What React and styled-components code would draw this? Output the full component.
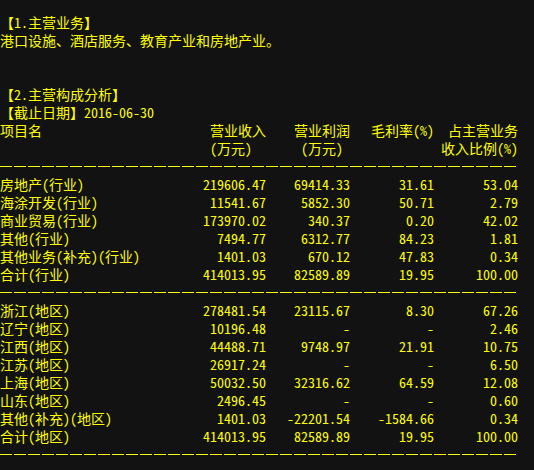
import React from 'react';
import styled, { createGlobalStyle } from 'styled-components';

const GlobalStyle = createGlobalStyle`
	html, body {
		margin: 0;
		padding: 0;
		background: #121212;
	}
`;

const Screen = styled.div`
	width: 534px;
	height: 470px;
	box-sizing: border-box;
	padding-top: 13px;
	background: #121212;
	color: #ffff00;
	font-family: "Noto Sans Mono CJK SC", "Liberation Mono", "Noto Sans CJK SC", monospace;
	font-size: 14px;
	line-height: 18px;
	overflow: hidden;
`;

const Line = styled.div`
	height: 18px;
	white-space: pre;
`;

const Table = styled.div`
	display: grid;
	grid-template-columns: 182px repeat(4, 84px);
	grid-auto-rows: 18px;
`;

const NameCell = styled.div`
	white-space: pre;
`;

const Cell = styled.div`
	white-space: pre;
	text-align: right;
	padding-right: ${(props) => props.$pad || 0}px;
`;

const Rule = styled.div`
	grid-column: 1 / -1;
	position: relative;
	height: 18px;

	&::after {
		content: '';
		position: absolute;
		left: 0;
		top: 9px;
		width: 518px;
		height: 1px;
		background: repeating-linear-gradient(
			to right,
			#ffff00 0,
			#ffff00 12px,
			transparent 12px,
			transparent 14px
		);
	}
`;

const industryRows = [
	['房地产(行业)', '219606.47', '69414.33', '31.61', '53.04'],
	['海涂开发(行业)', '11541.67', '5852.30', '50.71', '2.79'],
	['商业贸易(行业)', '173970.02', '340.37', '0.20', '42.02'],
	['其他(行业)', '7494.77', '6312.77', '84.23', '1.81'],
	['其他业务(补充)(行业)', '1401.03', '670.12', '47.83', '0.34'],
	['合计(行业)', '414013.95', '82589.89', '19.95', '100.00'],
];

const regionRows = [
	['浙江(地区)', '278481.54', '23115.67', '8.30', '67.26'],
	['辽宁(地区)', '10196.48', '-', '-', '2.46'],
	['江西(地区)', '44488.71', '9748.97', '21.91', '10.75'],
	['江苏(地区)', '26917.24', '-', '-', '6.50'],
	['上海(地区)', '50032.50', '32316.62', '64.59', '12.08'],
	['山东(地区)', '2496.45', '-', '-', '0.60'],
	['其他(补充)(地区)', '1401.03', '-22201.54', '-1584.66', '0.34'],
	['合计(地区)', '414013.95', '82589.89', '19.95', '100.00'],
];

const DataRow = ({ row }) => (
	<>
		<NameCell>{row[0]}</NameCell>
		{row.slice(1).map((v, i) => (
			<Cell key={i}>{v}</Cell>
		))}
	</>
);

export default function App() {
	return (
		<Screen>
			<GlobalStyle />
			<Line>【1.主营业务】</Line>
			<Line>港口设施、酒店服务、教育产业和房地产业。</Line>
			<Line />
			<Line />
			<Line>【2.主营构成分析】</Line>
			<Line>【截止日期】2016-06-30</Line>
			<Table>
				<NameCell>项目名</NameCell>
				<Cell>营业收入</Cell>
				<Cell>营业利润</Cell>
				<Cell>毛利率(%)</Cell>
				<Cell>占主营业务</Cell>

				<NameCell />
				<Cell $pad={14}>(万元)</Cell>
				<Cell $pad={7}>(万元)</Cell>
				<Cell />
				<Cell>收入比例(%)</Cell>

				<Rule />
				{industryRows.map((row) => (
					<DataRow key={row[0]} row={row} />
				))}
				<Rule />
				{regionRows.map((row) => (
					<DataRow key={row[0]} row={row} />
				))}
				<Rule />
			</Table>
		</Screen>
	);
}
